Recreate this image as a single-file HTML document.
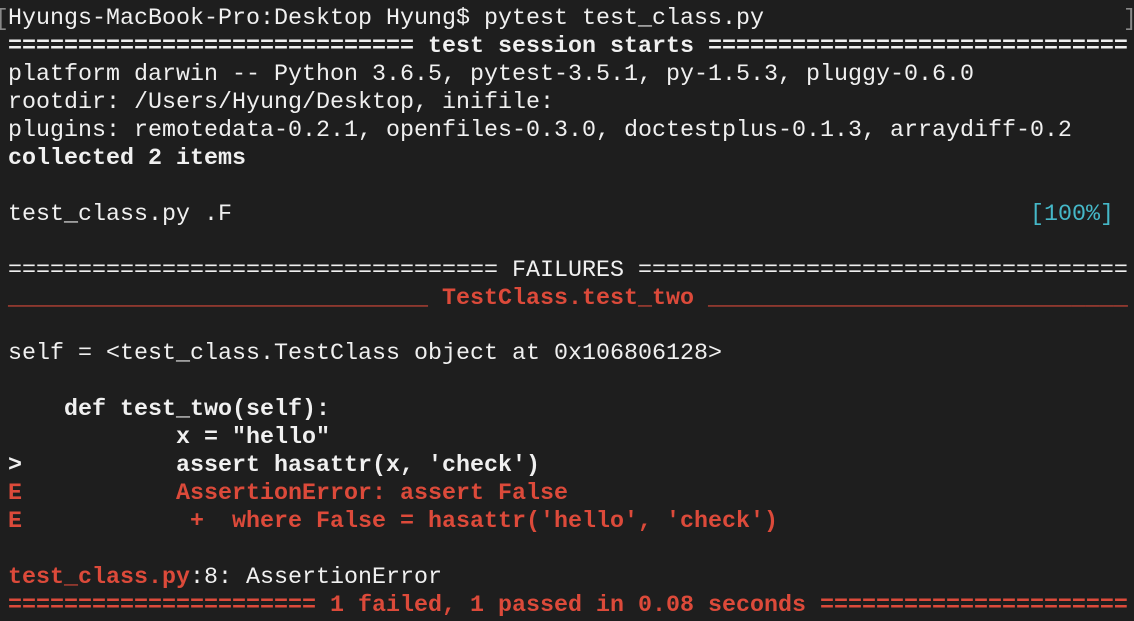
<!DOCTYPE html>
<html><head><meta charset="utf-8"><style>
html,body{margin:0;padding:0;background:#1e1e1e;width:1134px;height:618px;overflow:hidden}
pre{position:absolute;left:8px;top:6px;margin:0;font-family:"Liberation Mono",monospace;font-size:23.33px;line-height:27.95px;color:#f0f0f0;white-space:pre}
b{font-weight:bold}
.r{color:#dc4a3a}
.c{color:#45b8c8}
.g{position:absolute;color:#888;font-family:"Liberation Mono",monospace;font-size:23px;line-height:28px;top:5px}
</style></head><body>
<div class="g" style="left:-5px">[</div>
<div class="g" style="left:1123px">]</div>
<pre>Hyungs-MacBook-Pro:Desktop Hyung$ pytest test_class.py
<b>============================= test session starts ==============================</b>
platform darwin -- Python 3.6.5, pytest-3.5.1, py-1.5.3, pluggy-0.6.0
rootdir: /Users/Hyung/Desktop, inifile:
plugins: remotedata-0.2.1, openfiles-0.3.0, doctestplus-0.1.3, arraydiff-0.2
<b>collected 2 items</b>

test_class.py .F                                                         <span class="c">[100%]</span>

=================================== FAILURES ===================================
<b class="r">______________________________ TestClass.test_two ______________________________</b>

self = &lt;test_class.TestClass object at 0x106806128&gt;

<b>    def test_two(self):</b>
<b>            x = "hello"</b>
<b>&gt;           assert hasattr(x, 'check')</b>
<b class="r">E           AssertionError: assert False</b>
<b class="r">E            +  where False = hasattr('hello', 'check')</b>

<b class="r">test_class.py</b>:8: AssertionError
<b class="r">====================== 1 failed, 1 passed in 0.08 seconds ======================</b></pre>
</body></html>
